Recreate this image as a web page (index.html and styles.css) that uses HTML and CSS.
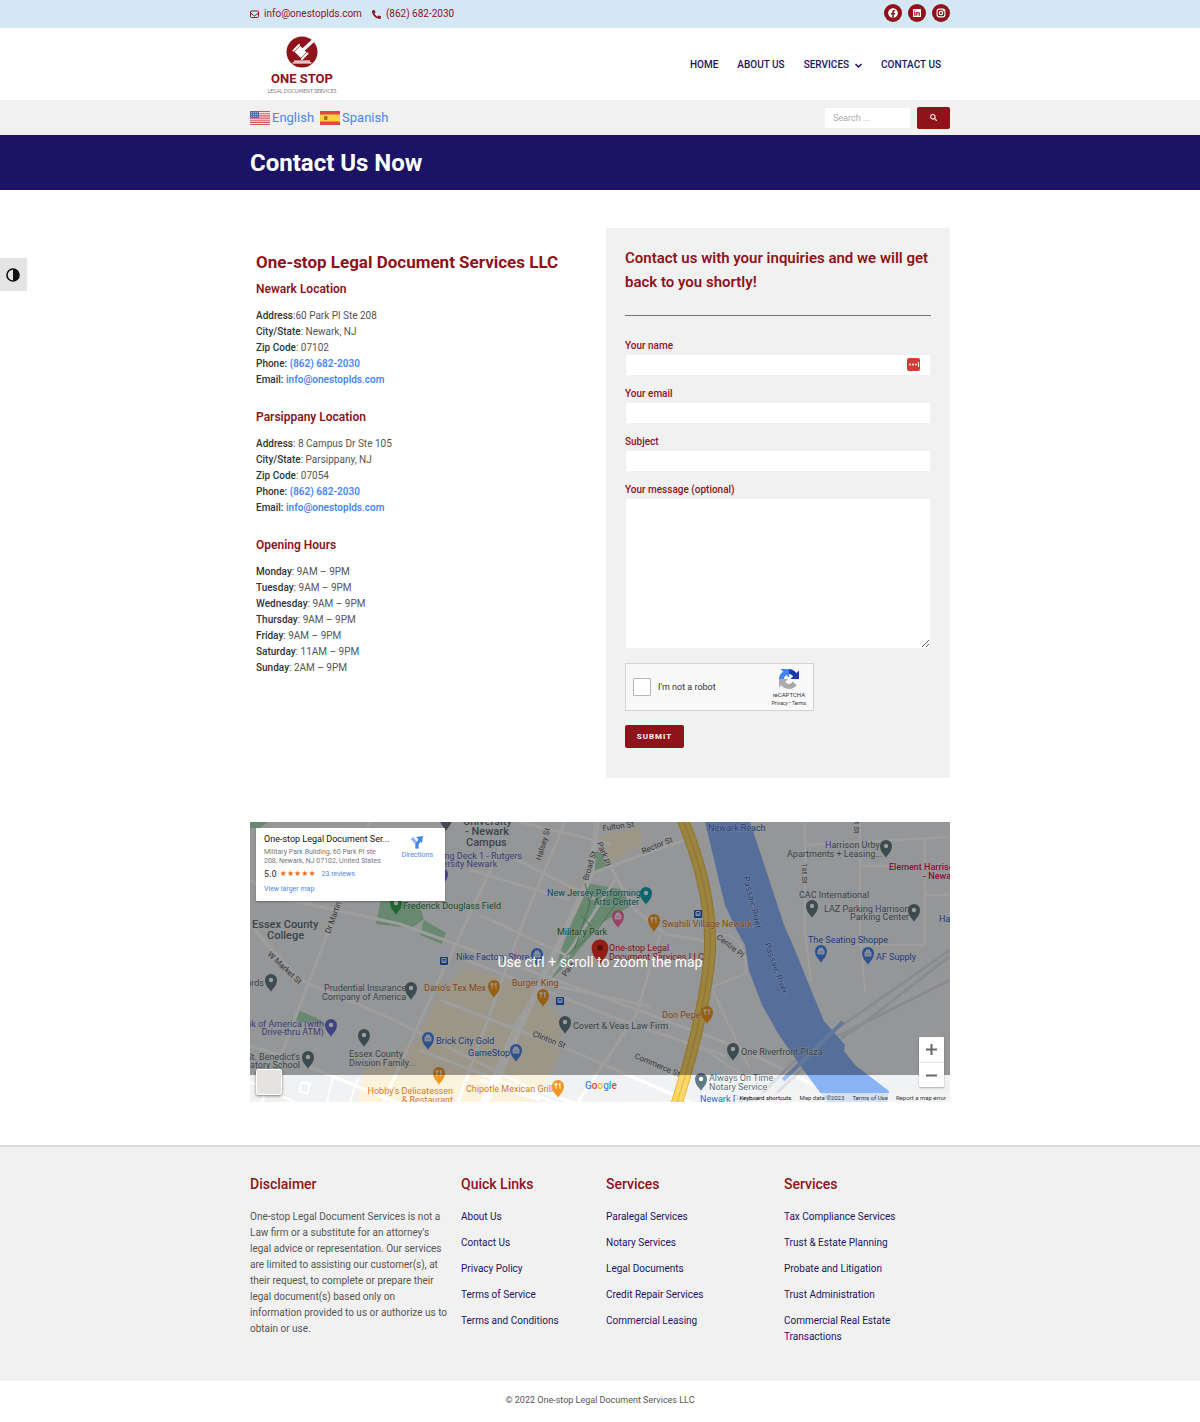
FILE: index.html
```html
<!DOCTYPE html>
<html lang="en">
<head>
<meta charset="utf-8">
<meta name="viewport" content="width=device-width, initial-scale=1">
<title>Contact Us Now</title>
<link rel="stylesheet" href="styles.css">
</head>
<body>
<div class="topbar">
  <div class="container topbar-inner">
    <div class="topbar-contact">
      <a href="mailto:info@onestoplds.com"><svg width="9" height="9" viewBox="0 0 18 18" fill="none" stroke="currentColor" stroke-width="2"><rect x="1" y="2" width="16" height="13" rx="2"/><path d="M1 6l8 6 8-6"/></svg>info@onestoplds.com</a>
      <a href="tel:8626822030"><svg width="9" height="9" viewBox="0 0 512 512" fill="currentColor"><path d="M497.39 361.8l-112-48a24 24 0 0 0-28 6.9l-49.6 60.6A370.66 370.66 0 0 1 130.6 204.11l60.6-49.6a23.94 23.94 0 0 0 6.9-28l-48-112A24.16 24.16 0 0 0 122.6.61l-104 24A24 24 0 0 0 0 48c0 256.5 207.9 464 464 464a24 24 0 0 0 23.4-18.6l24-104a24.29 24.29 0 0 0-14.01-27.6z"/></svg>(862) 682-2030</a>
    </div>
    <div class="social">
      <a href="#" aria-label="Facebook"><svg width="10" height="10" viewBox="0 0 512 512" fill="currentColor"><path d="M504 256C504 119 393 8 256 8S8 119 8 256c0 123.78 90.69 226.38 209.25 245V327.69h-63V256h63v-54.64c0-62.15 37-96.48 93.67-96.48 27.14 0 55.52 4.84 55.52 4.84v61h-31.28c-30.8 0-40.41 19.12-40.41 38.73V256h68.78l-11 71.69h-57.78V501C413.31 482.38 504 379.78 504 256z"/></svg></a>
      <a href="#" aria-label="LinkedIn"><svg width="8" height="10" viewBox="0 0 448 512" fill="currentColor"><path d="M416 32H31.9C14.3 32 0 46.5 0 64.3v383.4C0 465.5 14.3 480 31.9 480H416c17.6 0 32-14.5 32-32.3V64.3c0-17.8-14.4-32.3-32-32.3zM135.4 416H69V202.2h66.5V416zm-33.2-243c-21.3 0-38.5-17.3-38.5-38.5S80.9 96 102.2 96c21.2 0 38.5 17.3 38.5 38.5 0 21.3-17.2 38.5-38.5 38.5zm282.1 243h-66.4V312c0-24.8-.5-56.7-34.5-56.7-34.6 0-39.9 27-39.9 54.9V416h-66.4V202.2h63.7v29.2h.9c8.9-16.8 30.6-34.5 62.9-34.5 67.2 0 79.7 44.3 79.7 101.9V416z"/></svg></a>
      <a href="#" aria-label="Instagram"><svg width="10" height="10" viewBox="0 0 18 18" fill="none" stroke="currentColor" stroke-width="2"><rect x="2" y="2" width="14" height="14" rx="4"/><circle cx="9" cy="9" r="3"/><circle cx="13" cy="5" r=".5"/></svg></a>
    </div>
  </div>
</div>

<header class="header">
  <div class="container header-inner">
    <a class="logo" href="#" aria-label="One Stop Legal Document Services">
      <svg width="72" height="62" viewBox="0 0 72 62">
        <circle cx="36" cy="17" r="15.5" fill="#8e131b"/>
        <path d="M37 15L49 4" stroke="#fff" stroke-width="3.200"/>
        <g transform="rotate(45 34.500 17)" fill="#fff"><rect x="30" y="13" width="9" height="8"/><rect x="27.500" y="12" width="2" height="10" rx="1"/><rect x="39.500" y="12" width="2" height="10" rx="1"/></g>
        <path d="M28 25.500h16v1.200H28zM26.500 27.300h19v1.200h-19z" fill="#fff"/>
        <text class="logo-name" x="36" y="48" text-anchor="middle">ONE STOP</text>
        <text class="logo-tag" x="36" y="58" text-anchor="middle">LEGAL DOCUMENT SERVICES</text>
      </svg>
    </a>
    <nav class="nav" aria-label="Main">
      <a href="#">HOME</a>
      <a href="#">ABOUT US</a>
      <a href="#">SERVICES<svg width="7" height="5" viewBox="0 0 14 10" fill="none" stroke="currentColor" stroke-width="3"><path d="M1 2l6 6 6-6"/></svg></a>
      <a href="#">CONTACT US</a>
    </nav>
  </div>
</header>

<div class="langbar">
  <div class="container langbar-inner">
    <div class="languages">
      <a href="#"><svg width="20" height="14" viewBox="0 0 20 14"><rect width="20" height="14" fill="#f3e9ea"/><path d="M0 .5h20M0 2.7h20M0 4.9h20M0 7.1h20M0 9.3h20M0 11.4h20M0 13.5h20" stroke="#d95560" stroke-width="1.1"/><rect width="9" height="7" fill="#5b6aa8"/><path d="M1 1.5h7M1 3.5h7M1 5.5h7" stroke="#c5cbe4" stroke-width=".7" stroke-dasharray="1 1"/></svg>English</a>
      <a href="#"><svg width="20" height="14" viewBox="0 0 20 14"><rect width="20" height="14" fill="#dc4a42"/><rect y="3.5" width="20" height="7" fill="#fbd33f"/><rect x="4" y="5" width="3.500" height="4" rx="1" fill="#b9653a"/></svg>Spanish</a>
    </div>
    <form class="search" role="search">
      <input type="search" placeholder="Search ..." aria-label="Search">
      <button type="button" aria-label="Search"><svg width="7" height="7" viewBox="0 0 512 512" fill="currentColor"><path d="M505 442.7L405.3 343c-4.5-4.5-10.6-7-17-7H372c27.6-35.3 44-79.7 44-128C416 93.100 322.900 0 208 0S0 93.100 0 208s93.100 208 208 208c48.300 0 92.700-16.400 128-44v16.300c0 6.400 2.500 12.500 7 17l99.700 99.700c9.400 9.400 24.600 9.400 33.900 0l28.300-28.300c9.400-9.400 9.400-24.600.1-34zM208 336c-70.700 0-128-57.200-128-128 0-70.700 57.200-128 128-128 70.700 0 128 57.200 128 128 0 70.700-57.200 128-128 128z"/></svg></button>
    </form>
  </div>
</div>

<div class="page-title"><div class="container"><h1>Contact Us Now</h1></div></div>

<button class="contrast" type="button" aria-label="Toggle High Contrast"><svg width="14" height="14" viewBox="0 0 14 14"><circle cx="7" cy="7" r="6" fill="none" stroke="#111" stroke-width="1.600"/><path d="M7 1a6 6 0 0 1 0 12z" fill="#111"/></svg></button>

<main class="container">
  <div class="columns">
    <section class="info">
      <h2>One-stop Legal Document Services LLC</h2>
      <h3>Newark Location</h3>
      <p><b>Address</b>:60 Park Pl Ste 208<br><b>City/State</b>: Newark, NJ<br><b>Zip Code</b>: 07102<br><b>Phone: <a href="tel:8626822030">(862) 682-2030</a></b><br><b>Email: <a href="mailto:info@onestoplds.com">info@onestoplds.com</a></b></p>
      <h3>Parsippany Location</h3>
      <p><b>Address</b>: 8 Campus Dr Ste 105<br><b>City/State</b>: Parsippany, NJ<br><b>Zip Code</b>: 07054<br><b>Phone: <a href="tel:8626822030">(862) 682-2030</a></b><br><b>Email: <a href="mailto:info@onestoplds.com">info@onestoplds.com</a></b></p>
      <h3>Opening Hours</h3>
      <p><b>Monday</b>: 9AM – 9PM<br><b>Tuesday</b>: 9AM – 9PM<br><b>Wednesday</b>: 9AM – 9PM<br><b>Thursday</b>: 9AM – 9PM<br><b>Friday</b>: 9AM – 9PM<br><b>Saturday</b>: 11AM – 9PM<br><b>Sunday</b>: 2AM – 9PM</p>
    </section>

    <section class="form-card">
      <h2>Contact us with your inquiries and we will get back to you shortly!</h2>
      <hr>
      <form>
        <div class="field"><label for="name">Your name</label><div class="name-box"><input id="name" type="text"><svg class="autofill" width="13" height="13" viewBox="0 0 13 13"><rect width="13" height="13" rx="2" fill="#d63a35"/><circle cx="3" cy="6.500" r="1" fill="#fff"/><circle cx="6" cy="6.500" r="1" fill="#fff"/><circle cx="9" cy="6.500" r="1" fill="#fff"/><path d="M11.500 4v5" stroke="#fff"/></svg></div></div>
        <div class="field"><label for="email">Your email</label><input id="email" type="email"></div>
        <div class="field"><label for="subject">Subject</label><input id="subject" type="text"></div>
        <div class="field"><label for="message">Your message (optional)</label><textarea id="message"></textarea></div>
        <div class="captcha">
          <input id="robot" type="checkbox"><label for="robot">I'm not a robot</label>
          <div class="captcha-brand">
            <svg width="20" height="20" viewBox="0 0 64 64"><path d="M64 32V5l-8 8C48 4 40 0 32 0v16c6 0 10 3 13 8l-9 8z" fill="#1c3aa9"/><path d="M32 0H5l8 8C4 15 0 23 0 32h16c0-6 3-10 8-13l8 9z" fill="#4285f4"/><path d="M0 32v27l7-7c7 8 16 12 25 12 10 0 19-5 25-12L44 40c-3 5-7 8-12 8-6 0-10-3-12-7l9-9z" fill="#ababab"/></svg>
            <span class="captcha-name">reCAPTCHA</span>
            <span class="captcha-legal"><a href="#">Privacy</a> • <a href="#">Terms</a></span>
          </div>
        </div>
        <button class="submit" type="button">SUBMIT</button>
      </form>
    </section>
  </div>

  <section class="map" aria-label="Map">
    <svg class="map-canvas" viewBox="250 822 700 280" preserveAspectRatio="xMidYMid slice">
      <defs>
        <path id="pin" d="M0 9C-1 6-6 3-6-3a6 6 0 0 1 12 0C6 3 1 6 0 9z"/>
        <g id="place"><use href="#pin"/><circle cy="-3" r="2.200" fill="#fff"/></g>
        <g id="food"><use href="#pin"/><path d="M-2-6v6M2-6v6M-3-6v2h2v-2M2-6q-2 2 0 3" stroke="#fff" fill="none" stroke-width=".9"/></g>
        <g id="shop"><use href="#pin"/><path d="M-3-4h6v4h-6zM-1.500-4v-2h3v2" stroke="#fff" fill="#fff" fill-opacity=".6" stroke-width=".8"/></g>
        <g id="station"><rect x="-4" y="-4" width="8" height="8" rx="1" fill="#1a5fd0"/><path d="M-2-2.500h4v4h-4zM-2 0h4" stroke="#fff" fill="none" stroke-width=".9"/></g>
      </defs>
      <rect x="250" y="822" width="700" height="280" fill="#f1f2f4"/>
      <g fill="#fbf3dc">
        <path d="M464 966l76 24 22 34-4 36-26 42H358l6-32 52-28 20-44z"/>
        <path d="M600 836l40-10 2 18-36 22z"/>
      </g>
      <g fill="#a8dcb5">
        <path d="M585 883l35 6 12 16-32 19-26 32-23 24z"/>
        <path d="M381 899l38 6 5 14-12 9-36-4zM424 920l22 13-4 11-22-9zM297 1010l20 8 10 8-31-5zM250 822h18l-8 6h-10zM594 850l14 6-4 14-14 4z"/>
      </g>
      <g fill="none" stroke="#fff" stroke-width="3">
        <path d="M370 822L283 1050l-33 80M502 845l-70 150-50 110M250 880l30 18 120 26 200 72 140 52 80 40M250 925l50 55 90 38 140 70 60 20M565 822l-42 100-65 180M615 880l-45 70-52 70-36 82" />
        <path d="M597 822l-6 52-60 130-45 98" stroke-width="6"/>
        <path d="M505 854l90 45M480 915l90 42M470 870l100 30M520 822l90 22M590 874l60-22 40-14M601 850l34 60 30 24 46 8M660 935l-24 80-58 87M456 956l170 66 100 34M440 1000l130 50 120 52M420 1050l160 62M552 985l100 22M480 1080l60 20M305 905l30-20M305 1065l110 45M290 1058l-40-12"/>
        <path d="M712 935q35-6 34 38l-34 14M710 985l40 84M690 1040l60 40M805 822v110l6 50M860 822v110l5 60M860 866h90M925 840v105h-70M805 845l145-8M925 895h25" stroke-width="2"/>
      </g>
      <path d="M755 1102Q800 1050 850 1020L950 950M768 1102Q812 1056 860 1026L950 956M830 1040l120-60" fill="none" stroke="#dfe1e5" stroke-width="3"/>
      <path d="M581 915l14 16M585 883l5 20-15 45M622 895l-25 35-30 25" fill="none" stroke="#74b98b" stroke-width="1"/>
      <path d="M705 822h45l12 36 22 67 11 25 14 35 15 36 21 24-1 6 11 14 34 26-2 11h-60l-25-34-23-33-17-30-13-34-4-26-8-14-12-26-5-20-8-34z" fill="#8ab4f8"/>
      <path d="M783 1080l60-58" stroke="#a0c0f4" stroke-width="4"/>
      <path d="M682 818Q712 890 710 950Q706 1010 676 1106" fill="none" stroke="#e8b93c" stroke-width="12"/>
      <path d="M682 818Q712 890 710 950Q706 1010 676 1106" fill="none" stroke="#fbd66b" stroke-width="10"/>
      <path d="M682 818Q712 890 710 950Q706 1010 676 1106" fill="none" stroke="#e8b93c" stroke-width="1"/>
      <g fill="none" stroke="#fff" stroke-width="2"><path d="M302 1082l8 2-3 10-8-3zM250 1082l45 20M333 1076l-6 26M358 1078l-8 24"/></g>

      <g class="t-grey">
        <g class="t-big"><text x="463" y="825">University</text><text x="465" y="835">- Newark</text><text x="466" y="846">Campus</text><text x="252" y="928">Essex County</text><text x="267" y="939">College</text></g>
        <text x="324" y="991">Prudential Insurance</text><text x="322" y="1000">Company of America</text>
        <text x="349" y="1057">Essex County</text><text x="349" y="1066">Division Family...</text>
        <text x="300" y="1060" text-anchor="end">St. Benedict's</text><text x="300" y="1068" text-anchor="end">Preparatory School</text>
        <text x="264" y="986" text-anchor="end">Records</text>
        <text x="573" y="1029">Covert &amp; Veas Law Firm</text>
        <text x="741" y="1055">One Riverfront Plaza</text>
        <text x="709" y="1081">Always On Time</text><text x="709" y="1090">Notary Service</text>
        <text x="825" y="848">Harrison Urby</text><text x="787" y="857">Apartments + Leasing...</text>
        <text x="799" y="898">CAC International</text><text x="824" y="912">LAZ Parking Harrison</text><text x="850" y="920">Parking Center</text>
      </g>
      <g class="t-road">
        <text transform="translate(541 861) rotate(-74)">Halsey St</text>
        <text transform="translate(588 881) rotate(-73)">Broad St</text>
        <text transform="translate(597 843) rotate(70)">Park Pl</text>
        <text transform="translate(603 831) rotate(-8)">Fulton St</text>
        <text transform="translate(643 854) rotate(-22)">Rector St</text>
        <text transform="translate(330 934) rotate(-70)">Dr Martin L</text>
        <text transform="translate(267 955) rotate(43)">W Market St</text>
        <text transform="translate(532 1036) rotate(21)">Clinton St</text>
        <text transform="translate(634 1058) rotate(23)">Commerce St</text>
        <text transform="translate(716 938) rotate(38)">Centre Pl</text>
        <text transform="translate(566 977) rotate(-55)">Park</text>
        <text transform="translate(802 863) rotate(90)">1st St</text>
        <text transform="translate(854 813) rotate(90)">1st St</text>
      </g>
      <g class="t-blue">
        <text x="708" y="831">Newark Reach</text>
        <text transform="translate(743 877) rotate(76)">Passaic River</text>
        <text transform="translate(764 944) rotate(70)">Passaic River</text>
        <text x="456" y="960">Nike Factory Store</text><text x="436" y="1044">Brick City Gold</text><text x="468" y="1056">GameStop</text>
        <text x="808" y="943">The Seating Shoppe</text><text x="876" y="960">AF Supply</text><text x="939" y="922">Harrison</text><text x="700" y="1102">Newark Penn</text>
      </g>
      <g class="t-purple"><text x="324" y="1027" text-anchor="end">Bank of America (with</text><text x="324" y="1035" text-anchor="end">Drive-thru ATM)</text><text x="522" y="859" text-anchor="end">Parking Deck 1 - Rutgers</text><text x="497" y="867" text-anchor="end">University Newark</text></g>
      <g class="t-green"><text x="403" y="909">Frederick Douglass Field</text><text x="557" y="935">Military Park</text></g>
      <g class="t-teal"><text x="547" y="896">New Jersey Performing</text><text x="639" y="905" text-anchor="end">Arts Center</text></g>
      <g class="t-orange"><text x="424" y="991">Dario's Tex Mex</text><text x="512" y="986">Burger King</text><text x="662" y="927">Swahili Village Newark</text><text x="662" y="1018">Don Pepe</text><text x="453" y="1094" text-anchor="end">Hobby's Delicatessen</text><text x="453" y="1103" text-anchor="end">&amp; Restaurant</text><text x="466" y="1092">Chipotle Mexican Grill</text></g>
      <g class="t-red"><text x="609" y="951">One-stop Legal</text><text x="609" y="960">Document Services LLC</text></g>
      <g class="t-pink"><text x="889" y="870">Element Harrison</text><text x="923" y="879">- Newark</text></g>

      <g fill="#5f7a82"><use href="#place" x="411" y="991"/><use href="#place" x="364" y="1038"/><use href="#place" x="308" y="1060"/><use href="#place" x="271" y="983"/><use href="#place" x="565" y="1025"/><use href="#place" x="733" y="1052"/><use href="#place" x="701" y="1082"/><use href="#place" x="886" y="849"/><use href="#place" x="812" y="909"/><use href="#place" x="914" y="913"/><use href="#place" x="446" y="822"/></g>
      <g fill="#f29a1f"><use href="#food" x="494" y="989"/><use href="#food" x="543" y="998"/><use href="#food" x="654" y="923"/><use href="#food" x="707" y="1015"/><use href="#food" x="439" y="1076"/><use href="#food" x="558" y="1089"/></g>
      <g fill="#4b83e8"><use href="#shop" x="537" y="957"/><use href="#shop" x="428" y="1041"/><use href="#shop" x="516" y="1053"/><use href="#shop" x="821" y="954"/><use href="#shop" x="868" y="956"/></g>
      <use href="#place" x="331" y="1028" fill="#6470d3"/><use href="#place" x="442" y="877" fill="#6470d3"/>
      <use href="#place" x="396" y="906" fill="#34a853"/><use href="#place" x="646" y="896" fill="#12a4af"/><use href="#shop" x="618" y="919" fill="#f06ba5"/>
      <use href="#station" x="444" y="961"/><use href="#station" x="560" y="1001"/><use href="#station" x="698" y="914"/>
      <g transform="translate(600 952) scale(1.400)"><use href="#pin" fill="#ea3323"/><circle cy="-3" r="2" fill="#921611"/></g>
      <text class="t-google" x="585" y="1089"><tspan fill="#4285f4">G</tspan><tspan fill="#ea4335">o</tspan><tspan fill="#fbbc05">o</tspan><tspan fill="#4285f4">g</tspan><tspan fill="#34a853">l</tspan><tspan fill="#ea4335">e</tspan></text>
    </svg>
    <div class="map-shade"></div>
    <p class="map-hint">Use ctrl + scroll to zoom the map</p>
    <div class="map-card">
      <div class="map-card-text">
        <strong>One-stop Legal Document Ser...</strong>
        <p>Military Park Building, 60 Park Pl ste<br>208, Newark, NJ 07102, United States</p>
        <div class="rating"><span>5.0</span><span class="stars">★★★★★</span><a href="#">23 reviews</a></div>
        <a href="#">View larger map</a>
      </div>
      <a class="directions" href="#"><svg width="14" height="14" viewBox="0 0 14 14"><path d="M7 14V9L2 3" fill="none" stroke="#8ab4f8" stroke-width="3"/><path d="M7 13V9l3-4" fill="none" stroke="#4a86e8" stroke-width="3"/><path d="M6 2l7-1-1 7z" fill="#4a86e8"/></svg>Directions</a>
    </div>
    <button class="map-layer" type="button" aria-label="Show satellite imagery"></button>
    <div class="map-zoom">
      <button type="button" aria-label="Zoom in"><svg width="13" height="13" viewBox="0 0 13 13"><path d="M6.500 1v11M1 6.500h11" stroke="#666" stroke-width="2"/></svg></button>
      <button type="button" aria-label="Zoom out"><svg width="13" height="13" viewBox="0 0 13 13"><path d="M1 6.500h11" stroke="#666" stroke-width="2"/></svg></button>
    </div>
    <div class="map-legal"><button type="button">Keyboard shortcuts</button><span>Map data ©2023</span><a href="#">Terms of Use</a><a href="#">Report a map error</a></div>
  </section>
</main>

<footer class="footer">
  <div class="container footer-grid">
    <section><h2>Disclaimer</h2><p>One-stop Legal Document Services is not a Law firm or a substitute for an attorney's legal advice or representation. Our services are limited to assisting our customer(s), at their request, to complete or prepare their legal document(s) based only on information provided to us or authorize us to obtain or use.</p></section>
    <section><h2>Quick Links</h2><ul><li><a href="#">About Us</a></li><li><a href="#">Contact Us</a></li><li><a href="#">Privacy Policy</a></li><li><a href="#">Terms of Service</a></li><li><a href="#">Terms and Conditions</a></li></ul></section>
    <section><h2>Services</h2><ul><li><a href="#">Paralegal Services</a></li><li><a href="#">Notary Services</a></li><li><a href="#">Legal Documents</a></li><li><a href="#">Credit Repair Services</a></li><li><a href="#">Commercial Leasing</a></li></ul></section>
    <section><h2>Services</h2><ul><li><a href="#">Tax Compliance Services</a></li><li><a href="#">Trust &amp; Estate Planning</a></li><li><a href="#">Probate and Litigation</a></li><li><a href="#">Trust Administration</a></li><li><a href="#">Commercial Real Estate Transactions</a></li></ul></section>
  </div>
</footer>
<div class="copyright">© 2022 One-stop Legal Document Services LLC</div>
</body>
</html>
```
FILE: styles.css
```css
* { box-sizing: border-box; }
body { margin: 0; background: #fff; color: #555; font: 10px/16px Roboto, "Liberation Sans", sans-serif; }
h1, h2, h3, p, ul { margin: 0; padding: 0; }
ul { list-style: none; }
a { color: #4a87ee; text-decoration: none; }
b { font-weight: 500; color: #333; }
b a { font-weight: 600; }
svg { display: block; flex: none; }
button, input, textarea { font: inherit; border: 0; padding: 0; margin: 0; }
button { cursor: pointer; }
.container { width: 100%; max-width: 700px; margin: 0 auto; }

.topbar { background: #d4e7f5; }
.topbar-inner { display: flex; justify-content: space-between; height: 28px; padding-bottom: 2px; align-items: center; }
.topbar-contact { display: flex; gap: 10px; padding-top: 2px; }
.topbar-contact a { display: flex; align-items: center; gap: 5px; color: #8e131b; }
.social { display: flex; gap: 6px; }
.social a { display: grid; place-items: center; width: 18px; height: 18px; border-radius: 50%; background: #8e131b; color: #fff; }

.header-inner { display: flex; justify-content: space-between; align-items: center; height: 72px; padding-top: 2px; }
.logo { padding: 2px 0 0 16px; }
.logo-name { font: 700 13px Roboto, sans-serif; fill: #8e131b; }
.logo-tag { font: 5px Lato, sans-serif; fill: #777; }
.nav { display: flex; gap: 19px; padding-right: 9px; }
.nav a { display: flex; align-items: center; gap: 6px; color: #1b1464; font-weight: 500; }

.langbar { background: #f1f1f1; }
.langbar-inner { display: flex; justify-content: space-between; align-items: center; height: 35px; }
.languages { display: flex; gap: 6px; font-size: 13px; }
.languages a { display: flex; align-items: center; gap: 2px; }
.search { display: flex; align-items: center; gap: 7px; }
.search input { width: 85px; height: 20px; padding: 0 8px; background: #fff; font-size: 9px; }
.search input::placeholder { color: #aaa; }
.search button { display: grid; place-items: center; width: 33px; height: 22px; border-radius: 2px; background: #8e131b; color: #fff; }

.page-title { padding: 14px 0 13px; background: #1b1464; }
.page-title h1 { color: #fff; font-size: 24px; line-height: 28px; font-weight: 700; }

.contrast { position: fixed; left: 0; top: 258px; display: grid; place-items: center; width: 27px; height: 33px; padding-right: 1px; background: #e4e4e4; }

.columns { display: grid; grid-template-columns: 1fr 1fr; gap: 12px; padding: 38px 0 44px; }
.info { padding: 22px 6px; }
.info h2 { color: #8e131b; font-size: 17px; line-height: 24px; font-weight: 700; }
.info h3 { margin: 7px 0 11px; color: #8e131b; font-size: 12px; line-height: 16px; font-weight: 600; }
.info p + h3 { margin-top: 21px; }

.form-card { padding: 18px 19px 30px; background: #f1f1f1; }
.form-card h2 { color: #8e131b; font-size: 15px; line-height: 24px; font-weight: 600; }
.form-card hr { height: 1px; margin: 21px 0; border: 0; background: #6f7672; }
.field { margin-bottom: 10px; }
.field label { display: block; color: #8e131b; line-height: 18px; font-weight: 500; }
.field input, .field textarea { display: block; width: 100%; height: 20px; border: 1px solid #f1f1f1; border-width: 0 1px; background: #fff; }
.field textarea { height: 149px; margin-bottom: 15px; resize: vertical; }
.name-box { position: relative; }
.autofill { position: absolute; right: 11px; top: 3px; }
.captcha { display: flex; align-items: center; width: 189px; height: 48px; margin-bottom: 14px; padding: 0 7px; border: 1px solid #d3d3d3; background: #f9f9f9; color: #333; font-size: 9px; }
.captcha > input { width: 18px; height: 18px; margin-right: 7px; appearance: none; border: 1px solid #b4b4b4; border-radius: 1px; background: #fff; }
.captcha-brand { display: flex; flex-direction: column; align-items: center; margin-left: auto; }
.captcha-name { font-size: 6px; line-height: 11px; }
.captcha-legal { font-size: 5px; line-height: 6px; }
.captcha-legal a { color: inherit; }
.submit { display: block; width: 59px; height: 23px; border-radius: 2px; background: #8e131b; color: #fff; font-size: 8px; font-weight: 700; letter-spacing: 1px; }

.map { position: relative; height: 280px; overflow: hidden; }
.map-canvas { width: 100%; height: 100%; font-size: 9px; }
.map-canvas text { paint-order: stroke; stroke: rgba(255, 255, 255, .5); stroke-width: 1px; }
.t-grey { fill: #5a6f76; }
.t-big { font-size: 11px; font-weight: 500; }
.t-road { fill: #555; font-size: 8px; }
.t-blue { fill: #2f62c9; }
.t-purple { fill: #5c61c4; }
.t-green { fill: #1b7b3b; }
.t-teal { fill: #0a7782; }
.t-orange { fill: #d8731a; }
.t-red { fill: #c5221f; }
.t-pink { fill: #d81b60; font-weight: 500; }
.t-google { font-size: 10px; font-weight: 500; }
.map-shade { position: absolute; inset: 0 0 27px; background: rgba(0, 0, 0, .38); }
.map-hint { position: absolute; inset: 130px 0 auto; color: #fff; font-size: 14px; line-height: 20px; text-align: center; }
.map-card { position: absolute; left: 6px; top: 6px; display: flex; justify-content: space-between; width: 189px; height: 73px; padding: 5px 12px 5px 8px; border-radius: 1px; background: #fff; box-shadow: 0 1px 2px rgba(0, 0, 0, .3); font-size: 7px; line-height: 9px; white-space: nowrap; }
.map-card-text { display: flex; flex-direction: column; width: 126px; }
.map-card strong { color: #111; font-size: 9px; line-height: 12px; font-weight: 400; }
.map-card p { margin: 3px 0 2px; color: #777; }
.rating { display: flex; gap: 3px; margin-bottom: 5px; line-height: 12px; }
.rating span:first-child { font-size: 9px; font-weight: 500; }
.rating a { margin-left: 3px; }
.stars { color: #e7711b; font-family: "DejaVu Sans", sans-serif; font-size: 8px; }
.directions { display: flex; flex-direction: column; align-items: center; gap: 2px; padding-top: 2px; }
.map-layer { position: absolute; left: 6px; bottom: 7px; width: 26px; height: 26px; border: 1px solid #fff; border-radius: 2px; background: #e5e3df; box-shadow: 0 1px 3px rgba(0, 0, 0, .5); }
.map-zoom { position: absolute; right: 6px; bottom: 15px; width: 25px; background: #fff; border-radius: 1px; box-shadow: 0 1px 2px rgba(0, 0, 0, .3); }
.map-zoom button { display: grid; place-items: center; width: 100%; height: 25px; background: none; }
.map-zoom button + button { border-top: 1px solid #e6e6e6; }
.map-legal { position: absolute; right: 0; bottom: 0; display: flex; gap: 8px; padding: 0 4px; background: rgba(245, 245, 245, .7); color: #333; font-size: 6px; line-height: 9px; }
.map-legal button { background: none; }
.map-legal a { color: inherit; }

.footer { margin-top: 43px; padding: 27px 0 36px; border-top: 2px solid #dcdcdc; background: #f1f1f1; }
.footer-grid { display: grid; grid-template-columns: 211fr 145fr 178fr 166fr; }
.footer section { padding-right: 12px; }
.footer h2 { margin-bottom: 15px; color: #8e131b; font-size: 14px; line-height: 20px; font-weight: 500; }
.footer li { margin-bottom: 10px; }
.footer li:last-child { margin-bottom: 0; }
.footer li a { color: #1b1464; }
.copyright { padding: 11px 0 14px; font-size: 9px; text-align: center; }
```
